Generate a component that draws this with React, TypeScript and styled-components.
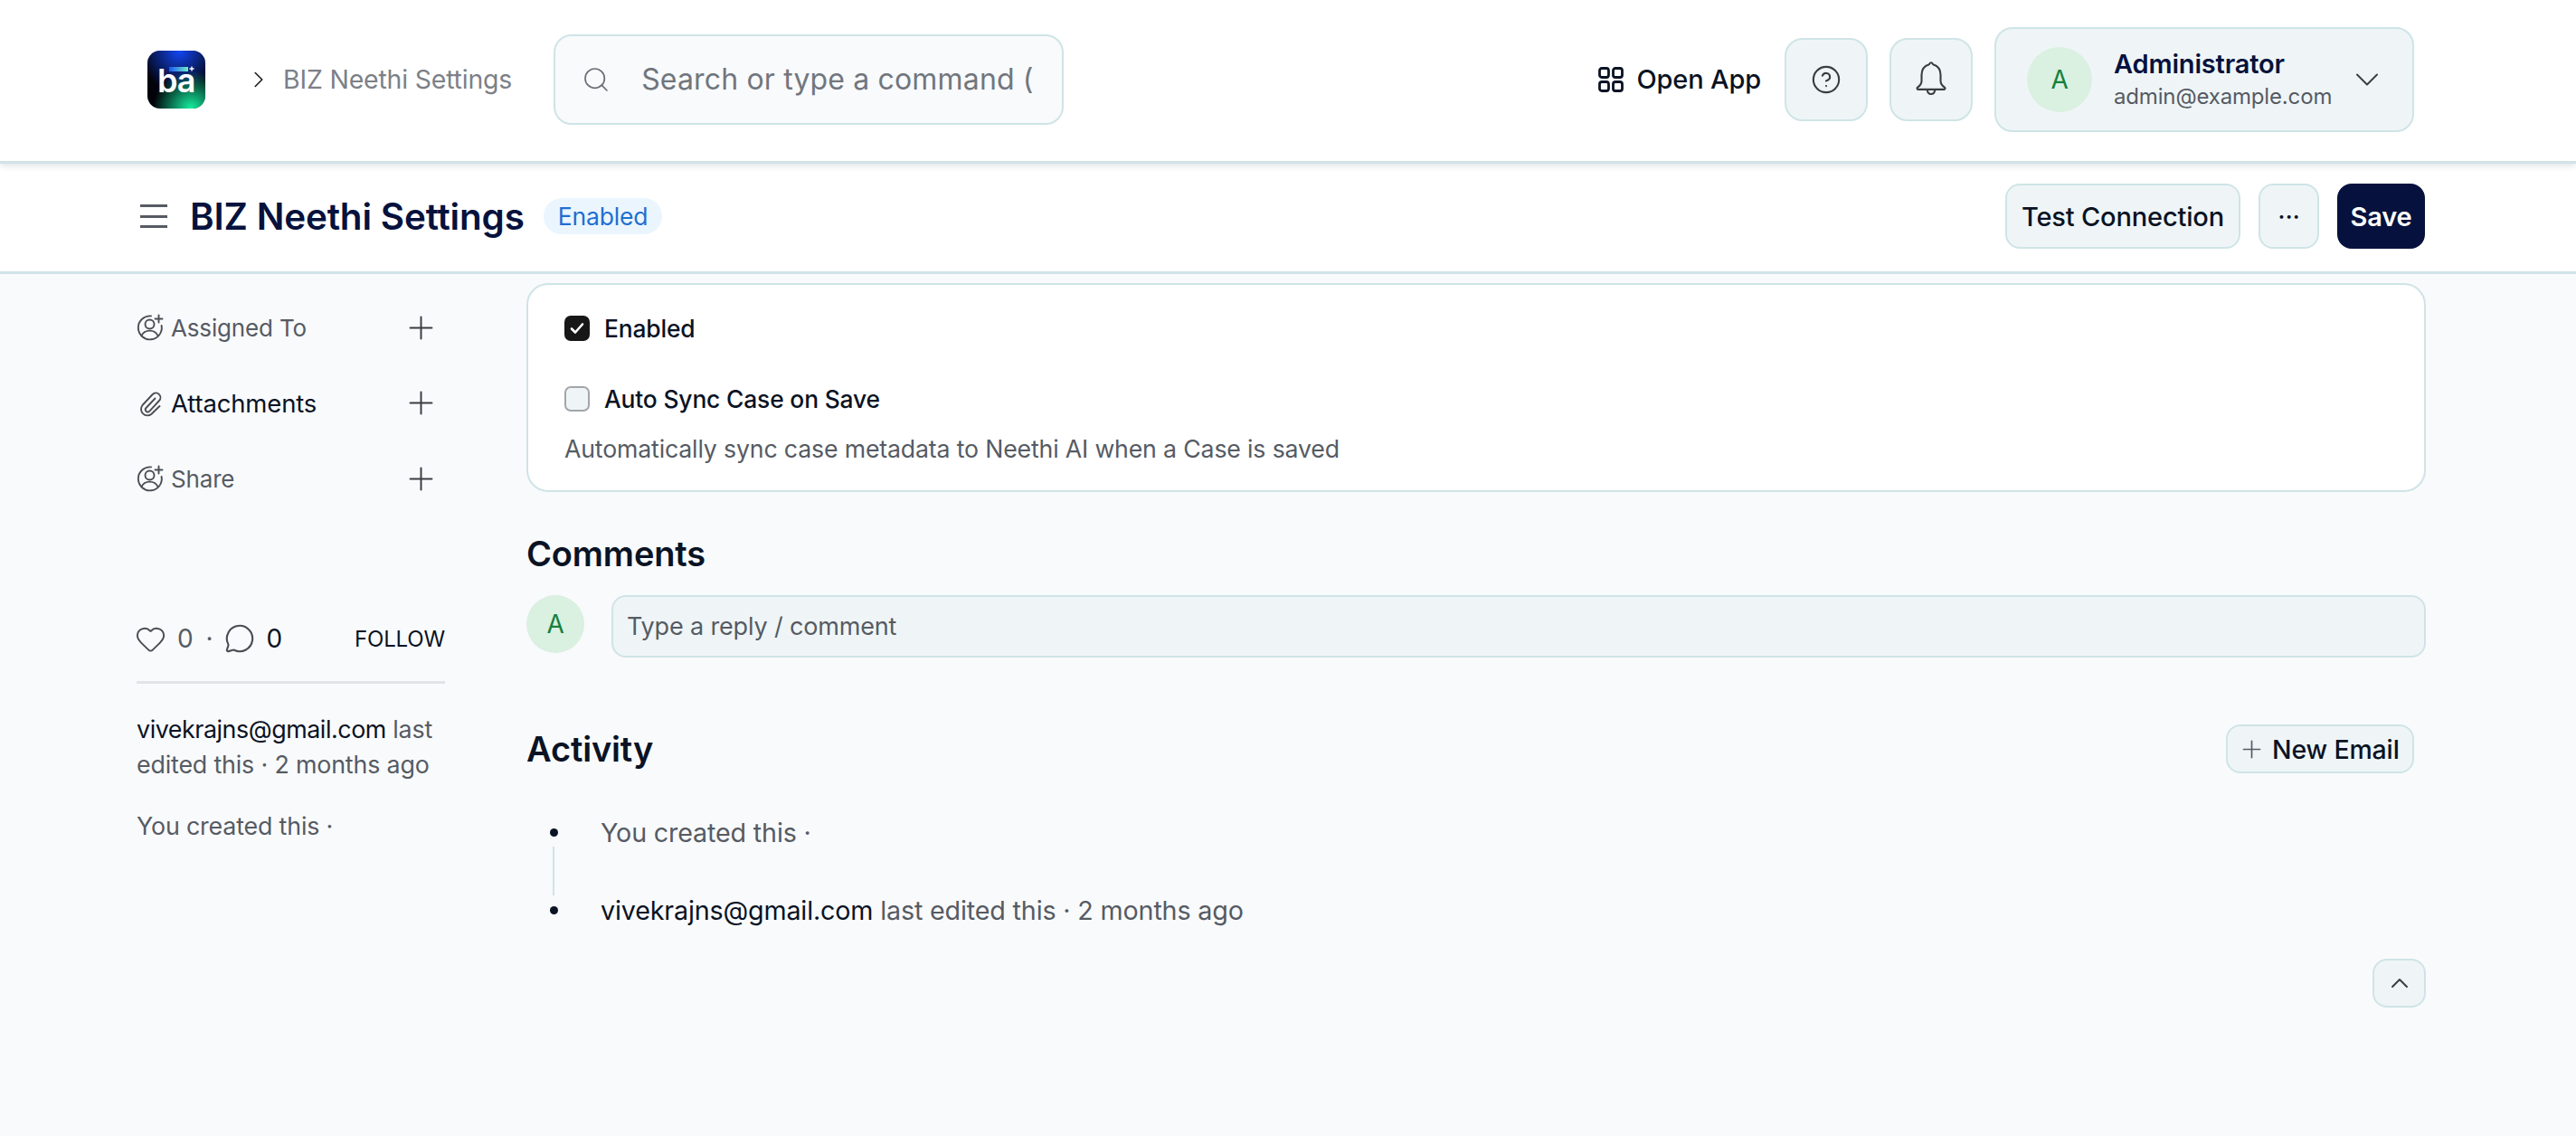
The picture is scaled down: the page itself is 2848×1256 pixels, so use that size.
import React from "react";
import styled, { createGlobalStyle } from "styled-components";
import {
  ChevronDown,
  ChevronRight,
  ChevronUp,
  CircleHelp,
  Heart,
  MessageCircle,
  Plus,
  Search,
} from "lucide-react";

const dark = "#06123d";
const ink = "#0a1324";
const muted = "#565b63";
const line = "#cfe4e6";
const soft = "#eff5f7";

const GlobalStyle = createGlobalStyle`
  * { box-sizing: border-box; }
  html, body { margin: 0; padding: 0; }
  body {
    background: #f9fafc;
    color: ${ink};
    font-family: "Inter", "Noto Sans", sans-serif;
    letter-spacing: -0.01em;
  }
`;

const Page = styled.div`
  height: 1256px;
  overflow: hidden;
`;

const Navbar = styled.header`
  display: flex;
  align-items: center;
  height: 181px;
  padding: 0 179px 3px 163px;
  background: #ffffff;
  border-bottom: 3px solid ${line};
  box-shadow: 0 3px 6px rgba(40, 60, 80, 0.12);
  position: relative;
`;

const LogoBox = styled.div`
  width: 64px;
  height: 64px;
  flex: none;
  border-radius: 14px;
  overflow: hidden;
`;

const Crumb = styled.div`
  display: flex;
  align-items: center;
  margin-left: 44px;
  gap: 12px;
  color: #7c8087;
  font-size: 28.4px;
  white-space: nowrap;
`;

const SearchBox = styled.div`
  display: flex;
  align-items: center;
  width: 564px;
  height: 100px;
  margin-left: 46px;
  padding: 0 30px 0 29px;
  gap: 34px;
  background: #f8fafc;
  border: 2px solid ${line};
  border-radius: 20px;
`;

const SearchText = styled.div`
  flex: 1;
  overflow: hidden;
  white-space: nowrap;
  color: #71767d;
  font-size: 32px;
  letter-spacing: 0.005em;
`;

const NavRight = styled.div`
  display: flex;
  align-items: center;
  margin-left: auto;
`;

const OpenApp = styled.div`
  display: flex;
  align-items: center;
  gap: 14px;
  font-size: 29px;
  font-weight: 500;
  margin-right: 26px;
`;

const IconButton = styled.div`
  display: flex;
  align-items: center;
  justify-content: center;
  width: 92px;
  height: 92px;
  margin-right: 24px;
  background: ${soft};
  border: 2px solid ${line};
  border-radius: 20px;
  color: #3a3d42;
`;

const Profile = styled.div`
  display: flex;
  align-items: center;
  width: 464px;
  height: 116px;
  padding: 0 28px 0 34px;
  background: ${soft};
  border: 2px solid ${line};
  border-radius: 20px;
`;

const Avatar = styled.div<{ $size: number }>`
  display: flex;
  align-items: center;
  justify-content: center;
  flex: none;
  width: ${({ $size }) => $size}px;
  height: ${({ $size }) => $size}px;
  border-radius: 50%;
  background: #daf0e1;
  color: #15803d;
  font-size: 28px;
`;

const ProfileText = styled.div`
  flex: 1;
  margin-left: 24px;
  padding-top: 3px;
`;

const ProfileName = styled.div`
  color: ${dark};
  font-size: 29px;
  font-weight: 600;
  line-height: 36px;
`;

const ProfileMail = styled.div`
  color: ${muted};
  font-size: 24px;
  line-height: 36px;
`;

const PageHead = styled.div`
  display: flex;
  align-items: center;
  height: 122px;
  padding: 0 167px 3px 155px;
  background: #ffffff;
  border-bottom: 3px solid ${line};
`;

const Burger = styled.div`
  display: flex;
  flex-direction: column;
  justify-content: space-between;
  width: 30px;
  height: 26px;
  margin-right: 25px;
  span {
    display: block;
    height: 3px;
    background: #565b63;
  }
`;

const PageTitle = styled.h1`
  margin: 0;
  color: ${dark};
  font-size: 40.4px;
  font-weight: 600;
`;

const Badge = styled.span`
  display: flex;
  align-items: center;
  height: 40px;
  margin-left: 21px;
  padding: 0 16px;
  border-radius: 20px;
  background: #ebf5fe;
  color: #1f6fd1;
  font-size: 26.5px;
`;

const Actions = styled.div`
  display: flex;
  gap: 20px;
  margin-left: auto;
`;

const Button = styled.div`
  display: flex;
  align-items: center;
  justify-content: center;
  height: 72px;
  padding: 0 16px;
  background: ${soft};
  border: 2px solid ${line};
  border-radius: 16px;
  color: ${ink};
  font-size: 29px;
  font-weight: 500;
`;

const MoreButton = styled(Button)`
  width: 67px;
  padding: 0;
  font-weight: 400;
`;

const SaveButton = styled(Button)`
  width: 97px;
  padding: 0;
  background: ${dark};
  border-color: ${dark};
  color: #ffffff;
  font-weight: 600;
`;

const Body = styled.div`
  display: grid;
  grid-template-columns: 341px 1fr;
  column-gap: 90px;
  padding: 0 166px 0 151px;
`;

const Sidebar = styled.aside`
  padding-top: 39px;
`;

const SideRow = styled.div`
  display: flex;
  align-items: center;
  height: 40px;
  margin-bottom: 43.5px;
  padding-right: 6px;
`;

const SideLabel = styled.span<{ $dark?: boolean }>`
  flex: 1;
  margin-left: 8px;
  color: ${({ $dark }) => ($dark ? ink : muted)};
  font-size: ${({ $dark }) => ($dark ? 27.5 : 26)}px;
`;

const Stats = styled.div`
  display: flex;
  align-items: center;
  height: 40px;
  margin: 137px 0 0 -2px;
  color: ${muted};
  font-size: 28px;
`;

const Count = styled.span<{ $dark?: boolean }>`
  margin-left: 12px;
  color: ${({ $dark }) => ($dark ? ink : muted)};
`;

const Dot = styled.span`
  margin: 0 13px 0 14px;
`;

const Follow = styled.span`
  margin-left: auto;
  color: ${ink};
  font-size: 24px;
`;

const SideDivider = styled.hr`
  height: 3px;
  margin: 27px 0 31px;
  border: 0;
  background: #e2e5e8;
`;

const Strong = styled.span`
  color: ${ink};
`;

const SideNote = styled.p`
  margin: 0 0 29px;
  color: ${muted};
  font-size: 26.8px;
  line-height: 39px;
  ${Strong} {
    letter-spacing: -0.016em;
  }
`;

const Main = styled.main`
  padding-top: 10px;
`;

const Card = styled.section`
  height: 231px;
  padding: 20px 40px 0;
  background: #ffffff;
  border: 2px solid ${line};
  border-radius: 24px;
`;

const CheckRow = styled.div`
  display: flex;
  align-items: center;
  gap: 16px;
  height: 56px;
  margin-bottom: 22px;
  font-size: 26.4px;
  font-weight: 500;
`;

const CheckBox = styled.span<{ $checked?: boolean }>`
  display: flex;
  align-items: center;
  justify-content: center;
  width: 28px;
  height: 28px;
  border-radius: 7px;
  background: ${({ $checked }) => ($checked ? "#171717" : soft)};
  border: 2px solid ${({ $checked }) => ($checked ? "#171717" : "#a3a5a8")};
`;

const Hint = styled.div`
  margin-top: -11px;
  color: ${muted};
  font-size: 26.7px;
`;

const SectionTitle = styled.h2`
  margin: 0;
  color: ${ink};
  font-size: 38px;
  font-weight: 600;
  line-height: 48px;
`;

const CommentsTitle = styled(SectionTitle)`
  margin-top: 44px;
`;

const CommentRow = styled.div`
  display: flex;
  gap: 30px;
  margin-top: 22px;
`;

const CommentInput = styled.div`
  flex: 1;
  display: flex;
  align-items: center;
  height: 69px;
  padding-left: 15px;
  background: ${soft};
  border: 2px solid ${line};
  border-radius: 16px;
  color: ${muted};
  font-size: 27px;
`;

const ActivityHead = styled.div`
  display: flex;
  align-items: center;
  justify-content: space-between;
  margin-top: 74px;
  padding-right: 13px;
`;

const NewEmail = styled.div`
  display: flex;
  align-items: center;
  gap: 7px;
  width: 208px;
  height: 54px;
  padding-left: 11px;
  background: ${soft};
  border: 2px solid ${line};
  border-radius: 16px;
  color: ${ink};
  font-size: 28.5px;
  font-weight: 500;
  white-space: nowrap;
`;

const Timeline = styled.ul`
  margin: 45px 0 0;
  padding: 0;
  list-style: none;
`;

const TimelineItem = styled.li`
  position: relative;
  display: flex;
  align-items: center;
  height: 40px;
  margin-bottom: 46px;
  padding-left: 82px;
  color: ${muted};
  font-size: 28.7px;
  &:last-child {
    margin-bottom: 34px;
  }
  &::before {
    content: "";
    position: absolute;
    left: 26px;
    top: 16px;
    width: 9px;
    height: 9px;
    border-radius: 50%;
    background: ${ink};
  }
  &:first-child::after {
    content: "";
    position: absolute;
    left: 29px;
    top: 36px;
    width: 2px;
    height: 54px;
    background: ${line};
  }
`;

const ScrollRow = styled.div`
  display: flex;
  justify-content: flex-end;
`;

const ScrollTop = styled.div`
  display: flex;
  align-items: center;
  justify-content: center;
  width: 59px;
  height: 54px;
  background: ${soft};
  border: 2px solid ${line};
  border-radius: 16px;
  color: #3a3d42;
`;

const AssignIcon = () => (
  <svg width="30" height="30" viewBox="0 0 30 30" fill="none" stroke="#4a4e54" strokeWidth="1.9" strokeLinecap="round">
    <path d="M16 2.400A13 13 0 1 0 27.600 13" />
    <circle cx="14.500" cy="11.500" r="5" />
    <path d="M5.500 24.200c1.600-3.600 5-5.600 9-5.600s7.400 2 9 5.600" />
    <path d="M24.500 1.500v8M20.500 5.500h8" />
  </svg>
);

const ClipIcon = () => (
  <svg width="30" height="30" viewBox="0 0 30 30" fill="none" stroke="#4a4e54" strokeWidth="1.9" strokeLinecap="round" strokeLinejoin="round">
    <path d="M20.500 9.500 10.500 20a2.600 2.600 0 0 0 3.800 3.600L25 12a5 5 0 0 0-7.300-7L6.500 17a7 7 0 0 0 10 9.700L25.500 18" />
  </svg>
);

const AppsIcon = () => (
  <svg width="28" height="28" viewBox="0 0 28 28" fill="none" stroke={ink} strokeWidth="2.800">
    <rect x="1.500" y="1.500" width="10" height="10" rx="2.500" />
    <rect x="16.500" y="1.500" width="10" height="10" rx="2.500" />
    <rect x="1.500" y="16.500" width="10" height="10" rx="2.500" />
    <rect x="16.500" y="16.500" width="10" height="10" rx="2.500" />
  </svg>
);

const BellIcon = () => (
  <svg width="38" height="42" viewBox="0 0 34 38" fill="none" stroke="#3a3d42" strokeWidth="1.900" strokeLinejoin="round">
    <path d="M17 2c1 0 1.500 1 2 1.800 5 1.500 7.500 5.500 7.500 10.500v6c0 3 2 5 4 6.500 1 .8.500 2-.5 2H4c-1 0-1.500-1.200-.5-2 2-1.500 4-3.500 4-6.500v-6c0-5 2.500-9 7.500-10.500C15.500 3 16 2 17 2z" />
    <path d="M13 29c.5 3 2 4.500 4 4.500s3.500-1.500 4-4.500" />
  </svg>
);

const Logo = () => (
  <LogoBox>
    <svg width="64" height="64" viewBox="0 0 64 64">
      <defs>
        <radialGradient id="blue" cx="0.55" cy="0" r="0.7">
          <stop offset="0" stopColor="#1347f5" />
          <stop offset="1" stopColor="#1347f5" stopOpacity="0" />
        </radialGradient>
        <radialGradient id="green" cx="0.75" cy="1" r="0.65">
          <stop offset="0" stopColor="#15f0a0" />
          <stop offset="1" stopColor="#15f0a0" stopOpacity="0" />
        </radialGradient>
        <linearGradient id="bar" x1="0" x2="1">
          <stop offset="0" stopColor="#1a55f0" />
          <stop offset="1" stopColor="#6ff0c8" />
        </linearGradient>
      </defs>
      <rect width="64" height="64" fill="#02030a" />
      <rect width="64" height="64" fill="url(#blue)" />
      <rect width="64" height="64" fill="url(#green)" />
      <rect x="24" y="18" width="21" height="5" fill="url(#bar)" />
      <path d="M49 17.500v5M46.500 20h5" stroke="#fff" strokeWidth="1.400" />
      <text x="11" y="46" fill="#fff" fontFamily="Inter, sans-serif" fontWeight="600" fontSize="36" letterSpacing="-1">ba</text>
    </svg>
  </LogoBox>
);

export default function App() {
  return (
    <Page>
      <GlobalStyle />
      <Navbar>
        <Logo />
        <Crumb>
          <ChevronRight size={30} color="#1a1d22" strokeWidth={1.3} />
          BIZ Neethi Settings
        </Crumb>
        <SearchBox>
          <Search size={32} strokeWidth={1.3} color="#6b7078" />
          <SearchText>Search or type a command (Ctrl + G)</SearchText>
        </SearchBox>
        <NavRight>
          <OpenApp>
            <AppsIcon />
            Open App
          </OpenApp>
          <IconButton>
            <CircleHelp size={34} strokeWidth={1.5} />
          </IconButton>
          <IconButton>
            <BellIcon />
          </IconButton>
          <Profile>
            <Avatar $size={72}>A</Avatar>
            <ProfileText>
              <ProfileName>Administrator</ProfileName>
              <ProfileMail>admin@example.com</ProfileMail>
            </ProfileText>
            <ChevronDown size={44} strokeWidth={1.1} color="#3a3d42" />
          </Profile>
        </NavRight>
      </Navbar>
      <PageHead>
        <Burger>
          <span />
          <span />
          <span />
        </Burger>
        <PageTitle>BIZ Neethi Settings</PageTitle>
        <Badge>Enabled</Badge>
        <Actions>
          <Button>Test Connection</Button>
          <MoreButton>···</MoreButton>
          <SaveButton>Save</SaveButton>
        </Actions>
      </PageHead>
      <Body>
        <Sidebar>
          <SideRow>
            <AssignIcon />
            <SideLabel>Assigned To</SideLabel>
            <Plus size={41} strokeWidth={1.15} color="#3a3d42" />
          </SideRow>
          <SideRow>
            <ClipIcon />
            <SideLabel $dark>Attachments</SideLabel>
            <Plus size={41} strokeWidth={1.15} color="#3a3d42" />
          </SideRow>
          <SideRow>
            <AssignIcon />
            <SideLabel>Share</SideLabel>
            <Plus size={41} strokeWidth={1.15} color="#3a3d42" />
          </SideRow>
          <Stats>
            <Heart size={35} strokeWidth={1.35} color="#4a4e54" />
            <Count>0</Count>
            <Dot>·</Dot>
            <MessageCircle size={34} strokeWidth={1.5} color="#4a4e54" />
            <Count $dark>0</Count>
            <Follow>FOLLOW</Follow>
          </Stats>
          <SideDivider />
          <SideNote>
            <Strong>vivekrajns@gmail.com</Strong> last edited this · 2 months ago
          </SideNote>
          <SideNote>You created this ·</SideNote>
        </Sidebar>
        <Main>
          <Card>
            <CheckRow>
              <CheckBox $checked>
                <svg width="16" height="14" viewBox="0 0 16 14" fill="none" stroke="#fff" strokeWidth="2.600" strokeLinecap="round" strokeLinejoin="round">
                  <path d="M2 7.500 6 11.500 14 2.500" />
                </svg>
              </CheckBox>
              Enabled
            </CheckRow>
            <CheckRow>
              <CheckBox />
              Auto Sync Case on Save
            </CheckRow>
            <Hint>Automatically sync case metadata to Neethi AI when a Case is saved</Hint>
          </Card>
          <CommentsTitle>Comments</CommentsTitle>
          <CommentRow>
            <Avatar $size={64}>A</Avatar>
            <CommentInput>Type a reply / comment</CommentInput>
          </CommentRow>
          <ActivityHead>
            <SectionTitle>Activity</SectionTitle>
            <NewEmail>
              <Plus size={31} strokeWidth={1.3} color="#565b63" />
              New Email
            </NewEmail>
          </ActivityHead>
          <Timeline>
            <TimelineItem>You created this ·</TimelineItem>
            <TimelineItem>
              <span>
                <Strong>vivekrajns@gmail.com</Strong> last edited this · 2 months ago
              </span>
            </TimelineItem>
          </Timeline>
          <ScrollRow>
            <ScrollTop>
              <ChevronUp size={32} strokeWidth={1.5} />
            </ScrollTop>
          </ScrollRow>
        </Main>
      </Body>
    </Page>
  );
}
